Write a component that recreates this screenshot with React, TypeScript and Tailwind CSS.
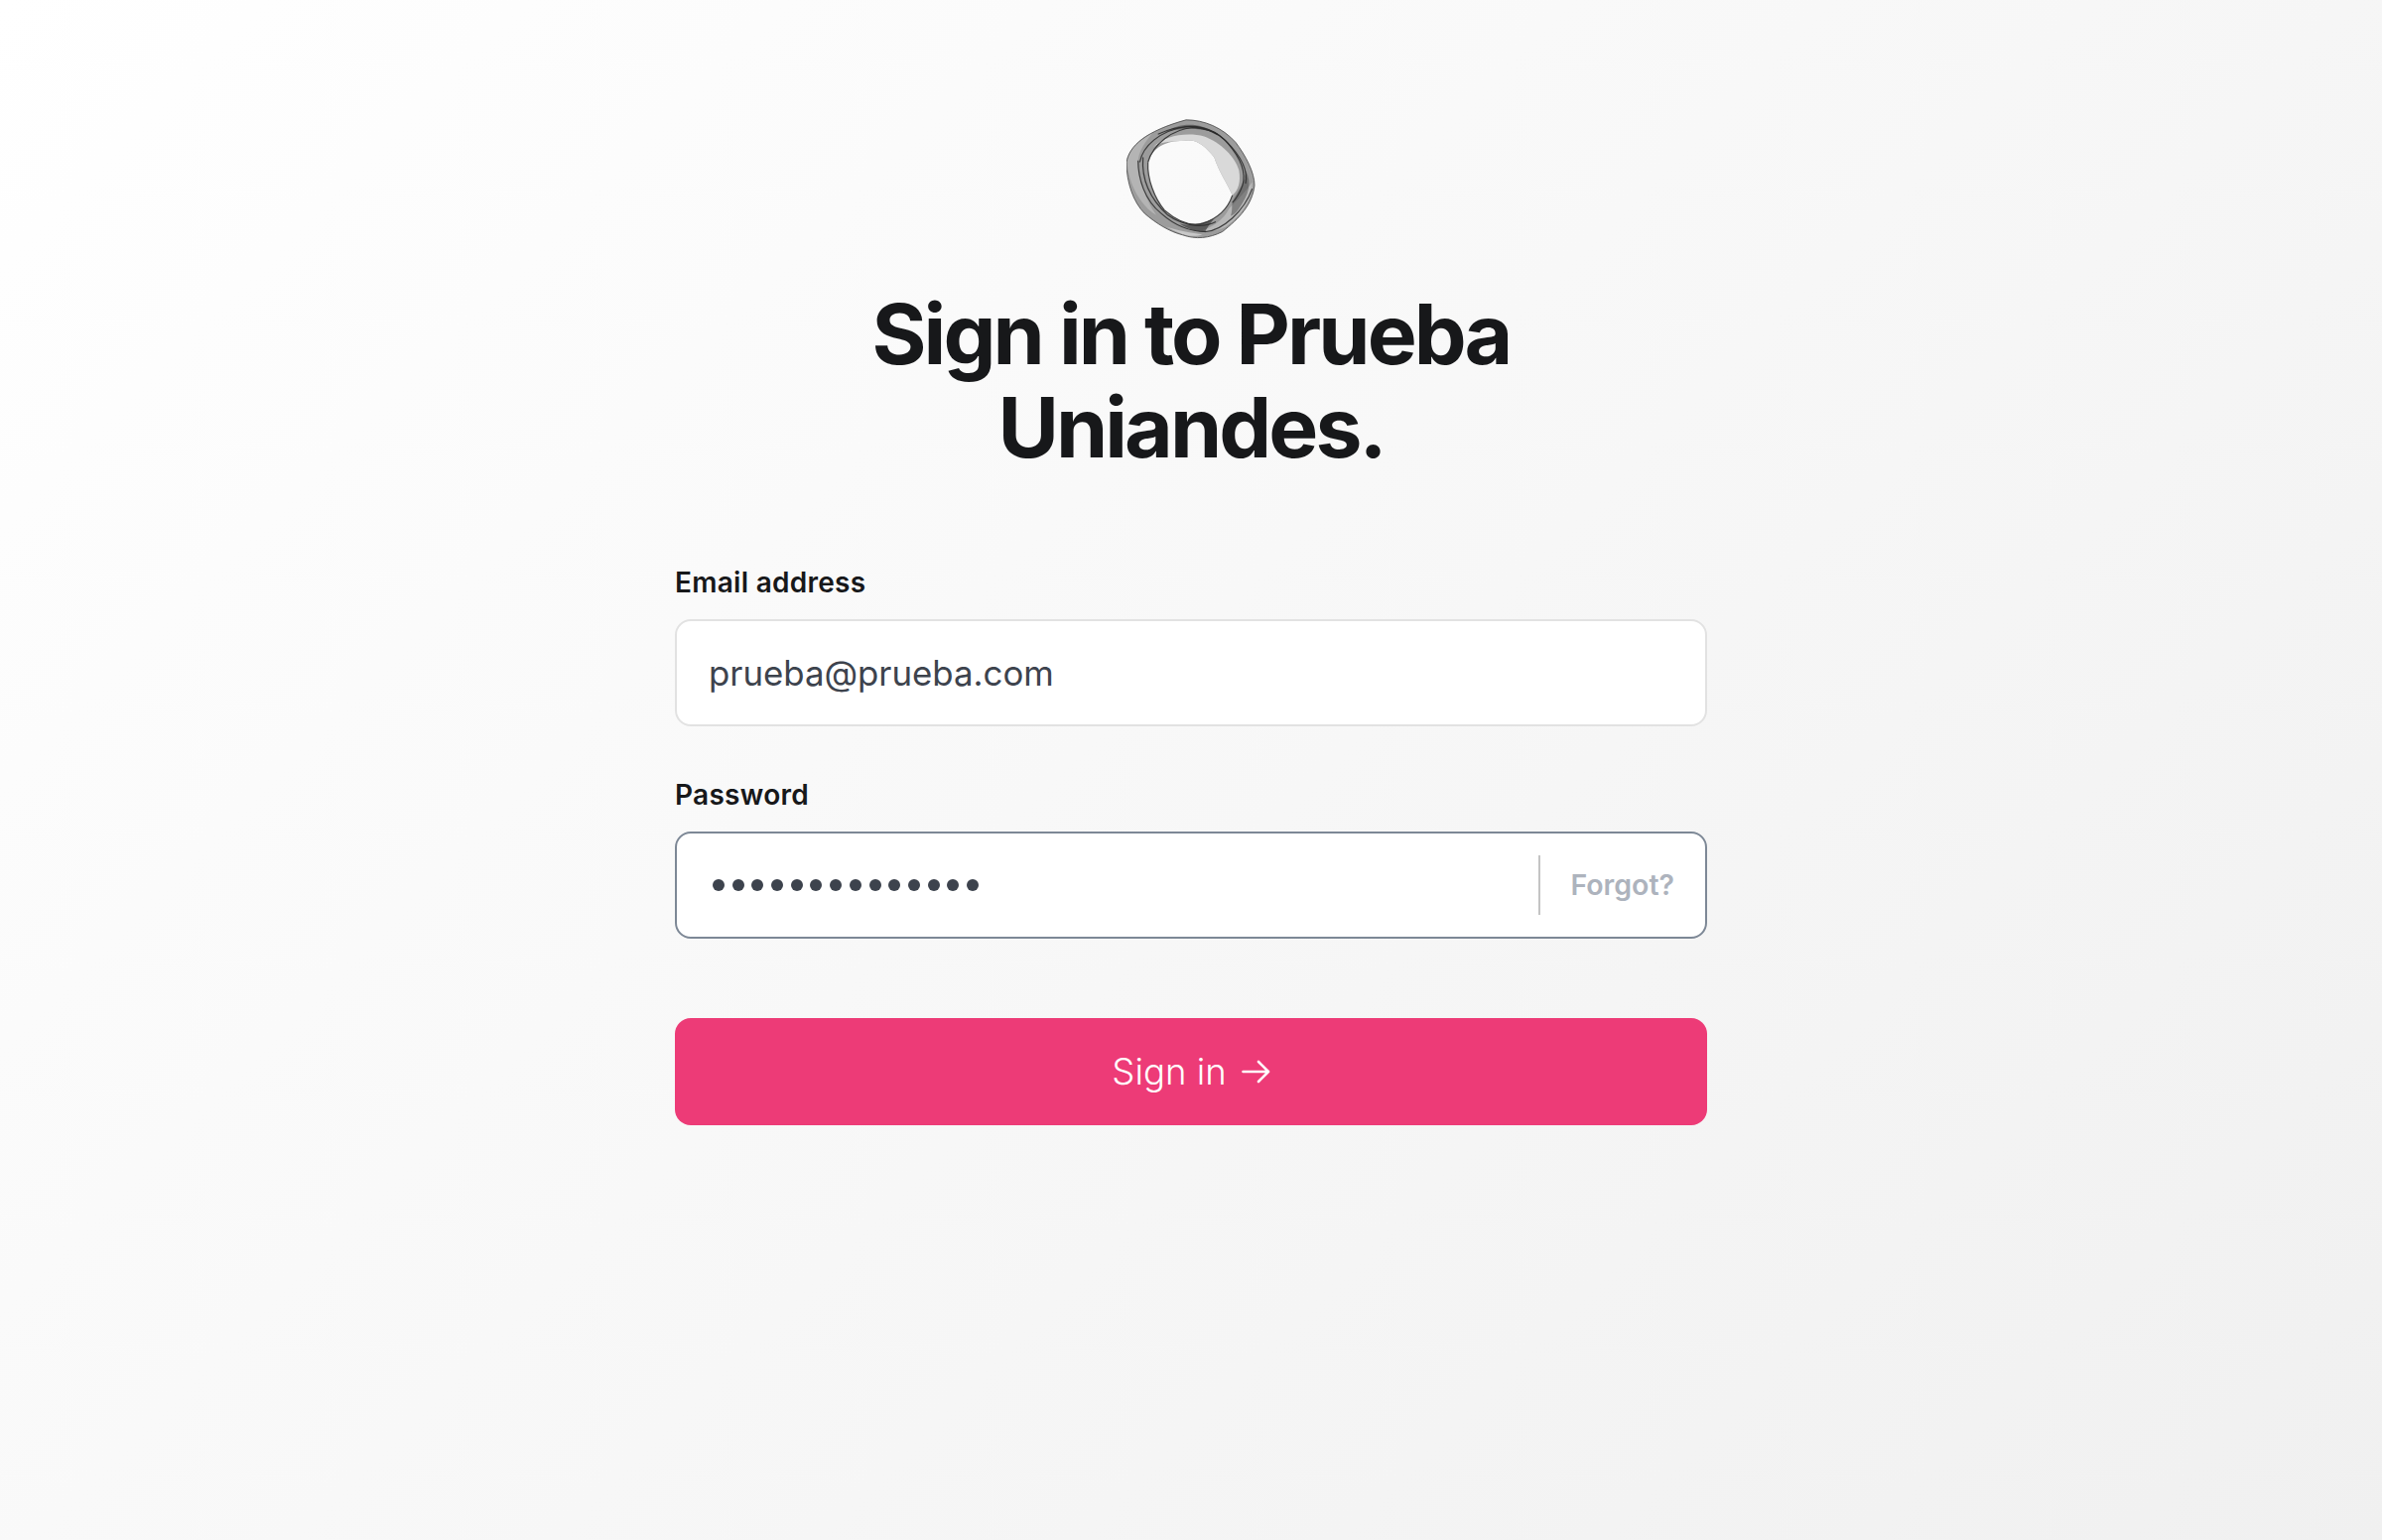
function Logo() {
  return (
    <svg width="130" height="121" viewBox="110 60 390 362" className="block">
      {/* ring body */}
      <path
        fillRule="evenodd"
        fill="#9c9c9c"
        d="M110 190C118 140 170 95 290 62C345 62 400 85 440 130C470 170 497 220 497 260C490 320 450 360 400 400C360 420 320 424 280 410C240 400 200 375 165 345C130 310 110 250 110 190ZM175 190C172 240 195 300 225 335C260 365 300 385 340 375C385 360 415 335 430 290C415 255 390 220 375 175C350 145 325 120 290 125C240 125 195 135 175 190Z"
      />
      {/* pale fold top right */}
      <path
        fill="#d9d9d9"
        d="M190 145C225 110 290 98 345 112C395 130 440 175 450 215C456 250 448 275 430 290C415 255 390 220 375 175C350 145 325 120 290 125C250 128 215 125 190 145Z"
      />
      <path fill="#b8b8b8" d="M420 330C440 310 470 280 490 250C492 300 460 350 410 385C385 400 350 400 340 395C375 385 405 360 420 330Z" />
      <path fill="#b4b4b4" d="M112 190C120 150 150 115 190 100C165 130 145 160 145 190C148 240 165 300 200 350C150 320 115 250 112 190Z" />
      <path fill="#c8c8c8" d="M230 385C260 395 310 405 340 408C320 416 295 414 275 406C260 400 245 393 230 385Z" />
      <g fill="none" stroke="#262626" strokeOpacity="0.85" strokeWidth="3.5">
        <path d="M150 190C160 140 210 95 290 82C345 78 395 100 430 150C460 190 475 235 455 275C445 295 438 305 430 312" />
        <path d="M145 185C145 240 165 305 215 345C260 385 310 400 350 400C400 395 465 340 490 270" />
        <path d="M175 190C172 240 195 300 225 335C260 365 300 385 340 375C385 360 415 335 430 290" />
        <path d="M160 175C155 240 180 300 235 350C270 375 330 395 380 370" />
        <path d="M205 105C270 75 350 70 410 125C450 165 480 210 470 255" />
        <path d="M175 190C190 135 250 90 310 85C345 88 370 95 385 105" />
      </g>
      <path fill="#2f2f2f" fillOpacity="0.6" d="M270 375C300 385 340 375 375 360C355 385 345 400 350 402C320 398 290 390 270 375Z" />
      <path fill="#2f2f2f" fillOpacity="0.5" d="M225 100C270 70 330 68 375 100C330 85 270 85 225 100Z" />
      <path fill="#2f2f2f" fillOpacity="0.4" d="M430 310C445 280 470 250 470 215C490 250 480 290 450 330C440 345 432 350 425 352C430 340 428 325 430 310Z" />
      {/* outer edge */}
      <path
        fill="none"
        stroke="#4a4a4a"
        strokeWidth="2.5"
        d="M110 190C118 140 170 95 290 62C345 62 400 85 440 130C470 170 497 220 497 260C490 320 450 360 400 400C360 420 320 424 280 410C240 400 200 375 165 345C130 310 110 250 110 190Z"
      />
    </svg>
  );
}

export default function App() {
  return (
    <div className="min-h-[1552px] bg-[linear-gradient(135deg,#ffffff_0%,#f0f0f0_100%)] font-['Inter',sans-serif]">
      <main className="mx-auto flex w-[1040px] flex-col items-center pt-[120px]">
        <Logo />
        <h1 className="mt-[49px] w-[800px] text-center text-[84px] leading-[94px] font-bold tracking-[-0.035em] text-[#17181a]">
          Sign in to Prueba Uniandes.
        </h1>

        <form className="mt-[92px] w-full">
          <label className="block text-[28px] leading-[34px] font-semibold tracking-[0.01em] text-[#17181a]">Email address</label>
          <div className="mt-[20px] flex h-[108px] items-center rounded-[16px] border-2 border-[#e2e2e2] bg-white pl-[32px] text-[34.8px] text-[#3d434d]">
            prueba@prueba.com
          </div>

          <label className="mt-[52px] block text-[28px] leading-[34px] font-semibold tracking-[0.01em] text-[#17181a]">Password</label>
          <div className="mt-[20px] flex h-[108px] items-center rounded-[16px] border-2 border-[#7d8896] bg-white">
            <span className="flex flex-1 items-center gap-[7.7px] pl-[36px]">
              {Array.from({ length: 14 }).map((_, i) => (
                <span key={i} className="h-[12px] w-[12px] rounded-full bg-[#3d434d]" />
              ))}
            </span>
            <span className="h-[60px] w-[2px] bg-[#c4c4c4]" />
            <span className="pr-[31px] pl-[30px] text-[28.5px] font-semibold text-[#adb3bd]">Forgot?</span>
          </div>

          <button
            type="button"
            className="mt-[80px] flex h-[108px] w-full items-center justify-center gap-[15px] rounded-[16px] bg-[#ed3b77] text-[36.5px] font-light text-white"
          >
            Sign in
            <svg width="29" height="24" viewBox="0 0 29 24" fill="none" stroke="currentColor" strokeWidth="2.6" strokeLinecap="round" strokeLinejoin="round">
              <path d="M1.5 12H27M17 2L27 12L17 22" />
            </svg>
          </button>
        </form>
      </main>
    </div>
  );
}
